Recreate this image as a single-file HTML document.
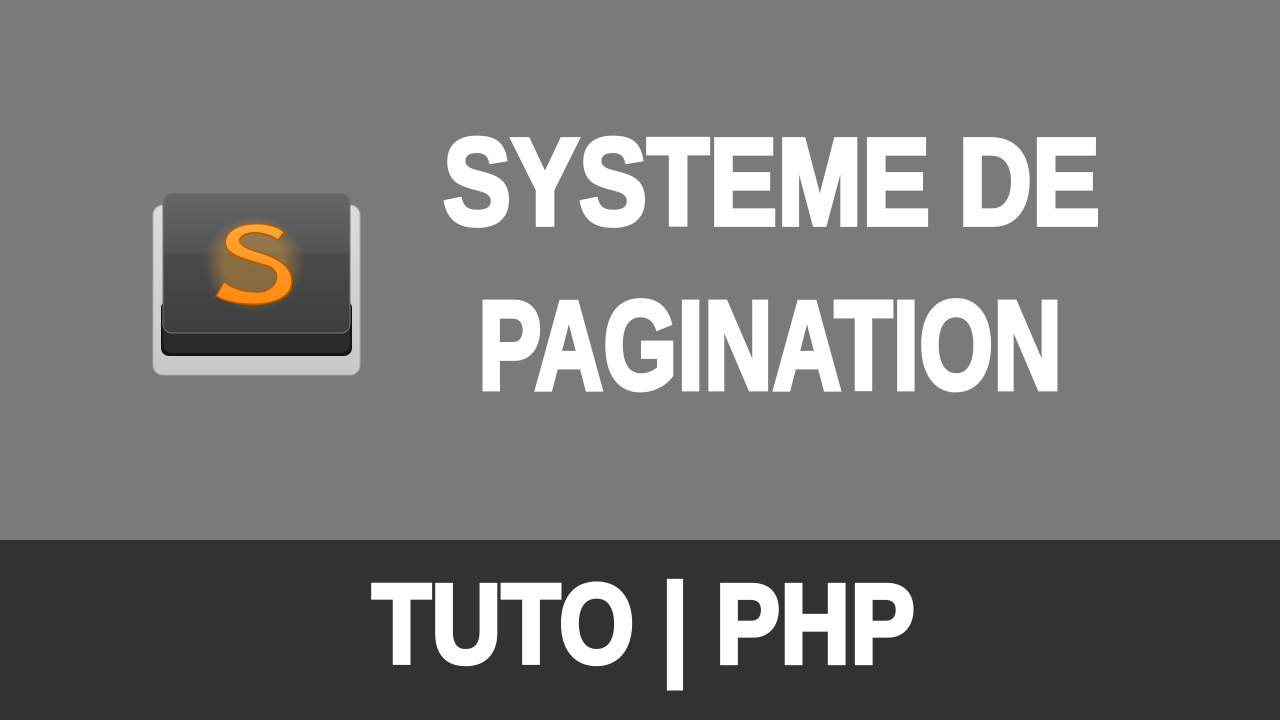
<!DOCTYPE html>
<html><head><meta charset="utf-8"><style>
*{margin:0;padding:0}
body{width:1280px;height:720px;overflow:hidden;background:#7a7a7a;position:relative;font-family:"Liberation Sans",sans-serif}
#bar{position:absolute;left:0;top:540px;width:1280px;height:180px;background:#323232}
.t{position:absolute;color:#fff;font-weight:bold;white-space:nowrap;transform-origin:0 0;line-height:1;-webkit-text-stroke:5px #fff}
</style></head><body>
<div id="bar"></div>
<svg style="position:absolute;left:0;top:0" width="400" height="400">
<defs>
<linearGradient id="base" x1="0" y1="0" x2="0" y2="1"><stop offset="0" stop-color="#dcdcdc"/><stop offset="1" stop-color="#c8c8c8"/></linearGradient>
<linearGradient id="top" x1="0" y1="0" x2="0" y2="1"><stop offset="0" stop-color="#666"/><stop offset="0.42" stop-color="#555"/><stop offset="0.44" stop-color="#4b4b4b"/><stop offset="1" stop-color="#3e3e3e"/></linearGradient>
<radialGradient id="glow"><stop offset="0.6" stop-color="#ffb030" stop-opacity=".35"/><stop offset="1" stop-color="#ffb030" stop-opacity="0"/></radialGradient>
<linearGradient id="og" x1="0" y1="0" x2="0" y2="1"><stop offset="0" stop-color="#ffa838"/><stop offset="1" stop-color="#ff8a10"/></linearGradient>
</defs>
<rect x="153" y="205" width="207" height="170" rx="10" fill="url(#base)" stroke="#aaa"/>
<rect x="161" y="300" width="191" height="56" rx="8" fill="#151515"/>
<rect x="163" y="193" width="187" height="160" rx="9" fill="#2a2a2a"/>
<rect x="163" y="193" width="187" height="140" rx="9" fill="url(#top)" stroke="#777" stroke-width="1"/>
<ellipse cx="254" cy="264" rx="50" ry="48" fill="url(#glow)"/>
<path d="M284 232 C272 220 232 220 226 238 C220 256 250 260 268 266 C284 272 276 292 258 292 C244 292 232 288 224 282 L216 296 C236 308 280 308 290 290 C298 270 280 258 258 252 C238 246 236 240 244 235 C254 230 270 234 278 240 Z" fill="url(#og)" stroke="#b85a00" stroke-width="1.5"/>
</svg>
<div class="t" data-x="443" data-y="140" data-w="657" data-h="95">SYSTEME DE</div>
<div class="t" data-x="478" data-y="302" data-w="584" data-h="97">PAGINATION</div>
<div class="t" data-x="372" data-y="585" data-w="543" data-h="87">TUTO | PHP</div>
<script>
document.querySelectorAll('.t').forEach(function(e){
 var fs=130;e.style.fontSize=fs+'px';
 var cap=fs*0.729+5, top=fs*(1-0.729)-fs*0.09-2.5;
 var w=e.getBoundingClientRect().width;
 var sx=+e.dataset.w/w, sy=+e.dataset.h/cap;
 e.style.left=e.dataset.x+'px';
 e.style.top=(+e.dataset.y - top*sy)+'px';
 e.style.transform='scale('+sx+','+sy+')';
});
</script>
</body></html>
